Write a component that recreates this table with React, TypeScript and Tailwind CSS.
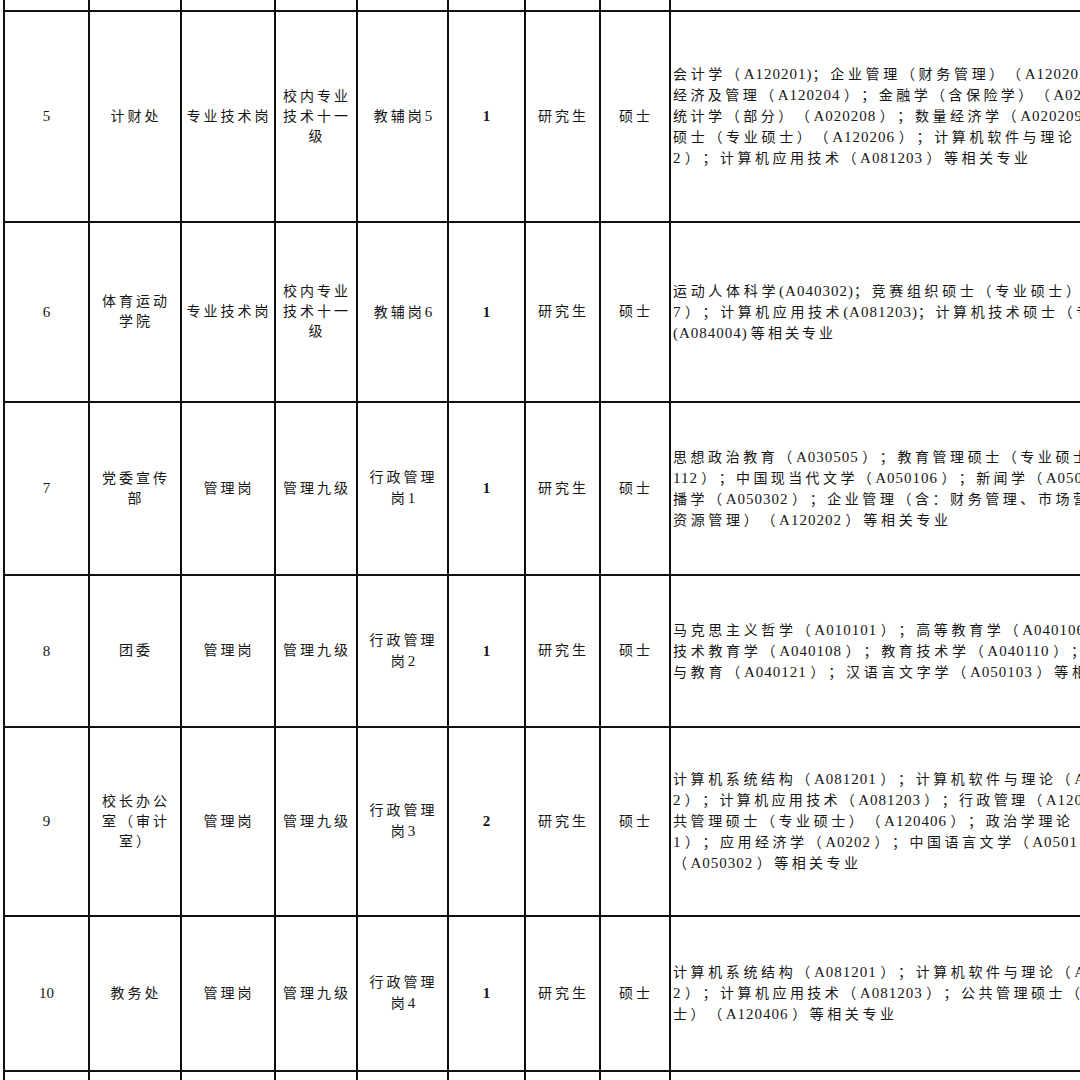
import React from "react";

function Rich({ text, mode }: { text: string; mode: "center" | "major" }) {
  const parts = text.split(/([\x20-\x7E]+)/);
  return (
    <>
      {parts.map((p, i) =>
        p === "" ? null : /[\x20-\x7E]/.test(p[0]) ? (
          <span key={i} className={mode === "center" ? "text-[15px] tracking-[0.8px]" : "text-[15px] tracking-[1px]"}>
            {p}
          </span>
        ) : (
          <span key={i} className={mode === "center" ? "tracking-[3px]" : "tracking-normal"}>
            {p}
          </span>
        )
      )}
    </>
  );
}

type Line = [string, string];

type Row = {
  no: string;
  dept: string[];
  type: string[];
  level: string[];
  post: string[];
  count: string;
  edu: string;
  degree: string;
  major: Line[];
  h: string;
};

const rows: Row[] = [
  {
    no: "5",
    dept: ["计财处"],
    type: ["专业技术岗"],
    level: ["校内专业", "技术十一", "级"],
    post: ["教辅岗5"],
    count: "1",
    edu: "研究生",
    degree: "硕士",
    major: [
      ["会计学（A120201)；企业管理（财务管理）（A12020", "w-[406px]"],
      ["经济及管理（A120204）；金融学（含保险学）（A02", "w-[409px]"],
      ["统计学（部分）（A020208）；数量经济学（A020209", "w-[410px]"],
      ["硕士（专业硕士）（A120206）；计算机软件与理论", "w-[399px]"],
      ["2）；计算机应用技术（A081203）等相关专业", "w-[355px]"],
    ],
    h: "h-[209px]",
  },
  {
    no: "6",
    dept: ["体育运动", "学院"],
    type: ["专业技术岗"],
    level: ["校内专业", "技术十一", "级"],
    post: ["教辅岗6"],
    count: "1",
    edu: "研究生",
    degree: "硕士",
    major: [
      ["运动人体科学(A040302)；竞赛组织硕士（专业硕士）", "w-[407px]"],
      ["7）；计算机应用技术(A081203)；计算机技术硕士（专", "w-[417px]"],
      ["(A084004)等相关专业", "w-[160px]"],
    ],
    h: "h-[178px]",
  },
  {
    no: "7",
    dept: ["党委宣传", "部"],
    type: ["管理岗"],
    level: ["管理九级"],
    post: ["行政管理", "岗1"],
    count: "1",
    edu: "研究生",
    degree: "硕士",
    major: [
      ["思想政治教育（A030505）；教育管理硕士（专业硕士", "w-[414px]"],
      ["112）；中国现当代文学（A050106）；新闻学（A050", "w-[410px]"],
      ["播学（A050302）；企业管理（含：财务管理、市场营", "w-[414px]"],
      ["资源管理）（A120202）等相关专业", "w-[275px]"],
    ],
    h: "h-[171px]",
  },
  {
    no: "8",
    dept: ["团委"],
    type: ["管理岗"],
    level: ["管理九级"],
    post: ["行政管理", "岗2"],
    count: "1",
    edu: "研究生",
    degree: "硕士",
    major: [
      ["马克思主义哲学（A010101）；高等教育学（A040106", "w-[412px]"],
      ["技术教育学（A040108）；教育技术学（A040110）；", "w-[412px]"],
      ["与教育（A040121）；汉语言文字学（A050103）等相", "w-[413px]"],
    ],
    h: "h-[150px]",
  },
  {
    no: "9",
    dept: ["校长办公", "室（审计", "室）"],
    type: ["管理岗"],
    level: ["管理九级"],
    post: ["行政管理", "岗3"],
    count: "2",
    edu: "研究生",
    degree: "硕士",
    major: [
      ["计算机系统结构（A081201）；计算机软件与理论（A", "w-[413px]"],
      ["2）；计算机应用技术（A081203）；行政管理（A120", "w-[410px]"],
      ["共管理硕士（专业硕士）（A120406）；政治学理论", "w-[397px]"],
      ["1）；应用经济学（A0202）；中国语言文学（A0501", "w-[405px]"],
      ["（A050302）等相关专业", "w-[185px]"],
    ],
    h: "h-[187px]",
  },
  {
    no: "10",
    dept: ["教务处"],
    type: ["管理岗"],
    level: ["管理九级"],
    post: ["行政管理", "岗4"],
    count: "1",
    edu: "研究生",
    degree: "硕士",
    major: [
      ["计算机系统结构（A081201）；计算机软件与理论（A", "w-[413px]"],
      ["2）；计算机应用技术（A081203）；公共管理硕士（", "w-[407px]"],
      ["士）（A120406）等相关专业", "w-[221px]"],
    ],
    h: "h-[153px]",
  },
];

function Center({ lines }: { lines: string[] }) {
  return (
    <div className="bg-white flex flex-col items-center justify-center text-center leading-[20px] pl-[2px]">
      {lines.map((l, i) => (
        <div key={i}>
          <Rich text={l} mode="center" />
        </div>
      ))}
    </div>
  );
}

function EmptyRow({ h }: { h: string }) {
  return (
    <>
      {Array.from({ length: 9 }).map((_, i) => (
        <div key={i} className={`bg-white ${h}`} />
      ))}
    </>
  );
}

export default function App() {
  return (
    <div className="w-[1080px] h-[1080px] overflow-hidden bg-white">
      <div className="ml-[3px] w-[1500px] bg-[#111] pl-[2px] mt-[-2px] text-[14px] text-[#161616] [text-spacing-trim:space-all] font-['Liberation_Serif','Noto_Sans_CJK_SC',serif]">
        <div className="grid grid-cols-[83px_90px_92px_80px_89px_75px_73px_68px_700px] gap-[2px]">
          <EmptyRow h="h-[12px]" />
          {rows.map((r) => (
            <React.Fragment key={r.no}>
              <div className={`bg-white flex items-center justify-center ${r.h}`}>
                <span className="text-[15px]">{r.no}</span>
              </div>
              <Center lines={r.dept} />
              <Center lines={r.type} />
              <Center lines={r.level} />
              <Center lines={r.post} />
              <div className="bg-white flex items-center justify-center">
                <span className="text-[15px] font-bold">{r.count}</span>
              </div>
              <Center lines={[r.edu]} />
              <Center lines={[r.degree]} />
              <div className="bg-white flex flex-col justify-center pl-[2px] leading-[20px]">
                {r.major.map(([m, w], i) => (
                  <div key={i} className={`${w} text-justify [text-align-last:justify]`}>
                    <Rich text={m} mode="major" />
                  </div>
                ))}
              </div>
            </React.Fragment>
          ))}
          <EmptyRow h="h-[40px]" />
        </div>
      </div>
    </div>
  );
}
